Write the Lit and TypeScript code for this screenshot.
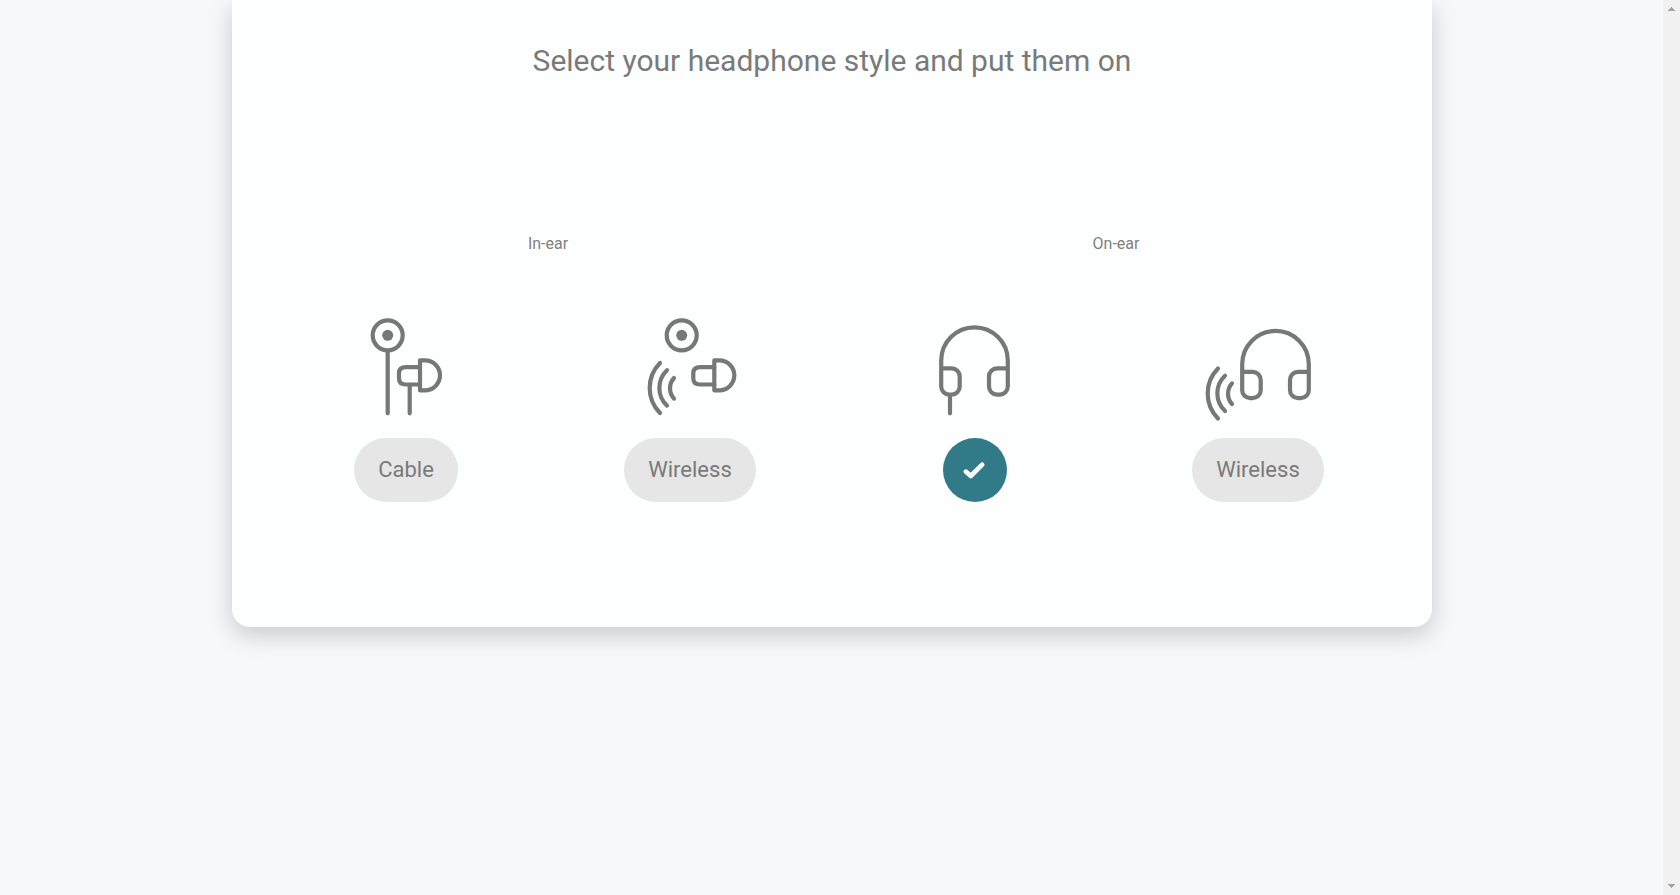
import { LitElement, html, svg, css } from "lit";
import { customElement, state } from "lit/decorators.js";

const bud = svg`
  <path d="M74 56.8H60Q53 56.8 53 62.8V68.2Q53 74.2 60 74.2H74" />
  <path d="M74 50H79A15 15 0 0 1 79 80H74Z" />`;

const waves = svg`
  <path d="M30 52.7A35.5 35.5 0 0 0 30 102.7" />
  <path d="M37 60A24.2 24.2 0 0 0 37 95.3" />
  <path d="M44 67.7A15.3 15.3 0 0 0 44 88.3" />`;

const headband = svg`
  <path d="M27.2 58H37.7A8 8 0 0 1 45.7 66V76.3A8 8 0 0 1 37.7 84.3H35.2A8 8 0 0 1 27.2 76.3V50.3A33.3 33.3 0 0 1 93.8 50.3V76.3A8 8 0 0 1 85.8 84.3H83A8 8 0 0 1 75 76.3V66A8 8 0 0 1 83 58H93.8" />`;

const speaker = (x: number) => svg`
  <circle cx=${x} cy="25" r="15" />
  <circle class="dot" cx=${x} cy="25" r="5.5" />`;

const options = [
  { label: "Cable", icon: svg`${speaker(41.7)}<path d="M41.7 41V103M63.7 75V103" />${bud}` },
  { label: "Wireless", icon: svg`${speaker(51.7)}<g transform="translate(10.3 0)">${bud}</g>${waves}` },
  { label: "Cable", icon: svg`${headband}<path d="M36 85V103" />` },
  {
    label: "Wireless",
    icon: svg`<g transform="translate(17 3.6)">${headband}</g><g transform="translate(-10 5.4)">${waves}</g>`,
  },
];

@customElement("app-root")
export class AppRoot extends LitElement {
  static styles = css`
    :host {
      display: flex;
      height: 895px;
      overflow: hidden;
      background: #f7f8fa;
      color: #7a7a7a;
      font-family: Roboto, sans-serif;
    }
    .page {
      flex: 1;
      padding-left: 232px;
    }
    .card {
      box-sizing: border-box;
      width: 1200px;
      height: 627px;
      padding: 39px 32px 0;
      border-radius: 0 0 18px 18px;
      background: #fdfffe;
      box-shadow: 0 8px 24px rgba(0, 0, 0, 0.19);
    }
    h1 {
      margin: 0;
      font-size: 30px;
      font-weight: 400;
      line-height: 44px;
      text-align: center;
    }
    .groups {
      display: grid;
      grid-template-columns: 1fr 1fr;
      margin-top: 149px;
      color: #808080;
      font-size: 16px;
      line-height: 24px;
      text-align: center;
    }
    .options {
      display: grid;
      grid-template-columns: repeat(4, 1fr);
      margin-top: 54px;
    }
    .option {
      display: flex;
      flex-direction: column;
      align-items: center;
    }
    .icon {
      width: 120px;
      height: 128px;
      fill: none;
      stroke: #777;
      stroke-width: 4.2;
      stroke-linecap: round;
      stroke-linejoin: round;
    }
    .dot {
      fill: #777;
      stroke: none;
    }
    button {
      height: 64px;
      padding: 0 24px;
      border: 0;
      border-radius: 32px;
      background: #e6e6e6;
      color: #7a7a7a;
      font: 400 22px/64px Roboto, sans-serif;
    }
    button.selected {
      width: 64px;
      margin-left: 2px;
      padding: 0;
      background: #317a87;
    }
    .check {
      display: block;
      width: 64px;
      height: 64px;
      fill: none;
      stroke: #fdfffe;
      stroke-width: 4.6;
      stroke-linecap: round;
      stroke-linejoin: round;
    }
    .scrollbar {
      display: flex;
      flex-direction: column;
      justify-content: space-between;
      width: 17px;
      background: #f1f1f1;
    }
    .arrow {
      display: block;
      width: 17px;
      height: 17px;
      fill: #a3a3a3;
      shape-rendering: crispEdges;
    }
  `;

  @state() private selected = 2;

  render() {
    return html`
      <main class="page">
        <section class="card">
          <h1>Select your headphone style and put them on</h1>
          <div class="groups"><span>In-ear</span><span>On-ear</span></div>
          <div class="options">
            ${options.map(
              (o, i) => html`<div class="option">
                <svg class="icon" viewBox="0 -0.3 120 128">${o.icon}</svg>
                <button
                  class=${i === this.selected ? "selected" : ""}
                  aria-label=${o.label}
                  @click=${() => (this.selected = i)}
                >${i === this.selected
                  ? html`<svg class="check" viewBox="0 0 64 64"><path d="M22.8 33.6L27.8 38L39.2 26.6" /></svg>`
                  : o.label}</button>
              </div>`
            )}
          </div>
        </section>
      </main>
      <div class="scrollbar">
        <svg class="arrow" viewBox="0 0 17 17"><path d="M8 7H9V8H10V9H11V10H12V11H5V10H6V9H7V8H8Z" /></svg>
        <svg class="arrow" viewBox="0 0 17 17"><path d="M5 6H12V7H11V8H10V9H9V10H8V9H7V8H6V7H5Z" /></svg>
      </div>
    `;
  }
}
